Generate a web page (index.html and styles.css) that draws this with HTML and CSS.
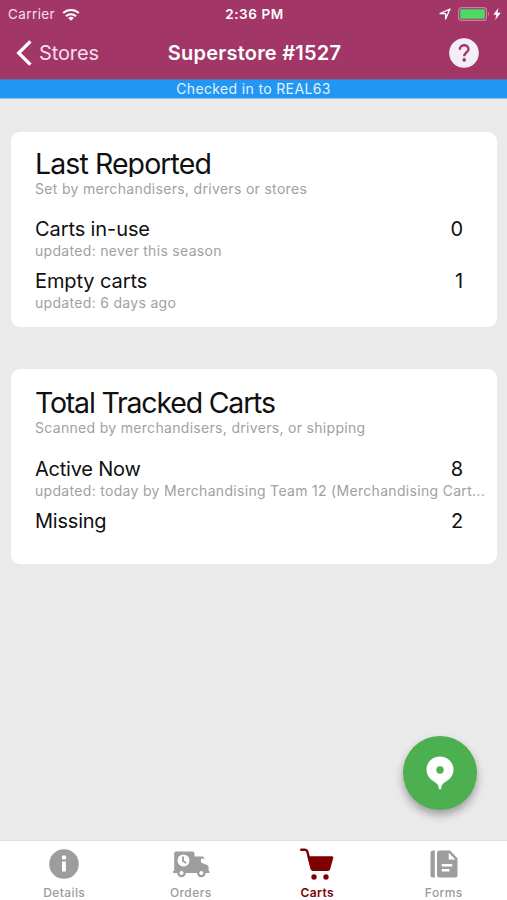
FILE: index.html
```html
<!DOCTYPE html>
<html lang="en">
<head>
<meta charset="utf-8">
<title>Superstore #1527</title>
<link rel="stylesheet" href="styles.css">
</head>
<body>
<div class="app">
  <header class="top">
    <div class="status">
      <div class="status-left">
        <span class="carrier">Carrier</span>
        <svg class="wifi" viewBox="0 0 18 13" width="18" height="13" fill="none" stroke="#fff" stroke-width="2.1"><path d="M1.2 5.1a11.2 11.2 0 0 1 15.6 0M4 8.2a7.2 7.2 0 0 1 10 0"/><path d="M6.2 10a4.2 4.2 0 0 1 5.6 0L9 12.8z" fill="#fff" stroke="none"/></svg>
      </div>
      <span class="time">2:36 PM</span>
      <div class="status-right">
        <svg viewBox="0 0 12 12" width="12" height="12" fill="none" stroke="#fff" stroke-width="1.3" stroke-linejoin="round"><path d="M1 5.6 11 1 6.6 11V5.6z"/></svg>
        <svg class="battery" viewBox="0 0 32 14" width="32" height="14"><rect x=".6" y=".6" width="27.8" height="12.8" rx="3" fill="none" stroke="#c783a6" stroke-width="1.2"/><rect x="2.2" y="2.2" width="24.6" height="9.6" rx="1.4" fill="#4cd964"/><path d="M30 4.8q2 2.2 0 4.4z" fill="#c783a6"/></svg>
        <svg class="bolt" viewBox="0 0 8 12" width="8" height="12" fill="#fff"><path d="M5.4 0 .3 6.8h3L2.3 12l5.4-7.2H4.5z"/></svg>
      </div>
    </div>
    <nav class="nav">
      <a class="back"><svg viewBox="0 0 16 26" width="16" height="26" fill="none" stroke="#fff" stroke-width="3.3"><path d="M14.4 1.3 2.7 13l11.7 11.7"/></svg><span class="back-label">Stores</span></a>
      <h1 class="screen-title">Superstore #1527</h1>
      <svg class="help" viewBox="0 0 30 30" width="30" height="30"><circle cx="15" cy="15" r="14.8" fill="#f3eef5"/><path d="M10.8 11.7c0-5.9 8.7-5.7 8.7-.5 0 3.1-4.3 3.3-4.3 7" fill="none" stroke="#a23767" stroke-width="2.4"/><circle cx="15.2" cy="21.9" r="1.8" fill="#a23767"/></svg>
    </nav>
  </header>
  <div class="banner"><span>Checked in to REAL63</span></div>
  <main class="content">
    <section class="card reported">
      <h2 class="card-title">Last Reported</h2>
      <p class="sub">Set by merchandisers, drivers or stores</p>
      <div class="rows">
        <div class="row"><div class="line"><span>Carts in-use</span><span class="num">0</span></div><p class="upd">updated: never this season</p></div>
        <div class="row"><div class="line"><span>Empty carts</span><span class="num">1</span></div><p class="upd">updated: 6 days ago</p></div>
      </div>
    </section>
    <section class="card tracked">
      <h2 class="card-title">Total Tracked Carts</h2>
      <p class="sub">Scanned by merchandisers, drivers, or shipping</p>
      <div class="rows">
        <div class="row"><div class="line"><span>Active Now</span><span class="num">8</span></div><p class="upd">updated: today by Merchandising Team 12 (Merchandising Cart...</p></div>
        <div class="row"><div class="line"><span>Missing</span><span class="num">2</span></div></div>
      </div>
    </section>
  </main>
  <footer class="tabs">
    <a class="tab"><svg viewBox="0 0 30 30" width="30" height="30"><circle cx="15" cy="15" r="14.8" fill="#9d9d9d"/><path d="M13 12.600h3.900v9.900H13z" fill="#fff"/><circle cx="15" cy="8.500" r="2.200" fill="#fff"/></svg><span>Details</span></a>
    <a class="tab"><svg viewBox="0 0 38 30" width="38" height="30" fill="#9d9d9d"><path d="M4 2.500h16.500a2 2 0 0 1 2 2v3h8.500l1.800 2.300h-3.800v3.800l6.600 2.600q1 .5 1 1.500v4.300h.8v2H1v-2h1.200V4.500a2 2 0 0 1 1.800-2z"/><circle cx="11.500" cy="11.500" r="6" fill="#fff"/><path d="M11 7.400v4.700l3.200 2" fill="none" stroke="#9d9d9d" stroke-width="1.800"/><circle cx="9.500" cy="24" r="4.300"/><circle cx="9.500" cy="24" r="2" fill="#fff"/><circle cx="29.300" cy="24" r="4.300"/><circle cx="29.300" cy="24" r="2" fill="#fff"/></svg><span>Orders</span></a>
    <a class="tab active"><svg viewBox="0 0 34 32" width="34" height="32" fill="#800000"><path d="M1.2 1.700h3.800q1.800 0 2.300 1.800l4.300 16" fill="none" stroke="#800000" stroke-width="2.400" stroke-linecap="round"/><path d="M7.300 8.200h24.500q2 0 1.500 1.900l-3.200 11.200q-.5 1.800-2.300 1.800H12.900q-1.800 0-2.300-1.800z"/><circle cx="14" cy="29" r="2.700"/><circle cx="26" cy="29" r="2.700"/></svg><span>Carts</span></a>
    <a class="tab"><svg viewBox="0 0 28 28" width="28" height="28" fill="#9d9d9d"><path d="M2.800.5H4.800v27H2.800Q.5 27.500.5 25V3Q.5.5 2.800.5zM9.300.5h10.700l7.500 7.700V25q0 2.500-2.500 2.500H9.300q-2.300 0-2.300-2.500V3Q7 .5 9.300.5z"/><path d="M18.700 2.800v6.800h6.700zM11.800 14h10.400v2.400H11.800zM11.800 19h7.600v2.400h-7.600z" fill="#fff"/></svg><span>Forms</span></a>
  </footer>
  <button class="fab" aria-label="Location"><svg viewBox="0 0 28 34" width="28" height="34"><path d="M14 .5C6.500.5.5 6.300.5 13.500c0 5.500 3.200 9.300 7 11.800 3.500 2.300 4.800 3 5.300 7 .2 1.600 2.200 1.600 2.400 0 .5-4 1.800-4.700 5.300-7 3.800-2.500 7-6.300 7-11.800C27.500 6.300 21.500.5 14 .5z" fill="#fff"/><circle cx="14" cy="14" r="3.700" fill="#4caf50"/></svg></button>
</div>
</body>
</html>
```

FILE: styles.css
```css
* { box-sizing: border-box; }
body, h1, h2, p { margin: 0; font-weight: 400; }
body { font-family: Inter, "Liberation Sans", sans-serif; color: #101010; }
svg { display: block; flex: none; }
.app { position: relative; width: 507px; height: 900px; display: flex; flex-direction: column; background: #eaeaea; overflow: hidden; }
.top { height: 79px; flex: none; background: #a23767; color: #fff; }
.status { height: 27px; display: grid; grid-template-columns: 1fr auto 1fr; align-items: center; padding: 0 6px 0 8px; }
.status-left, .status-right { display: flex; align-items: center; }
.status-left { gap: 7px; }
.carrier { font-size: 13.5px; letter-spacing: .4px; color: #f4dfe9; }
.time { font-size: 13.5px; font-weight: 600; letter-spacing: .6px; line-height: 27px; padding-top: 1px; }
.status-right { justify-content: flex-end; }
.battery { margin-left: 7px; }
.bolt { margin-left: 3px; }
.nav { height: 51px; display: grid; grid-template-columns: 1fr auto 1fr; align-items: center; padding: 0 28px; }
.back { display: flex; align-items: center; gap: 7px; margin-left: -12px; }
.back-label { font-size: 20px; letter-spacing: -.1px; color: #f4dfe9; }
.screen-title { font-size: 20px; font-weight: 600; letter-spacing: .22px; position: relative; left: 1px; }
.help { justify-self: end; }
.banner { height: 20px; flex: none; background: #2196f3; border-top: 1px solid #5277b5; border-bottom: 1px solid #8fc5f2; color: #e4f2fd; text-align: center; font-size: 14px; line-height: 18px; letter-spacing: .35px; }
.content { flex: 1; padding: 33px 10px 0 11px; display: flex; flex-direction: column; gap: 42px; }
.card { height: 195px; background: #fff; border-radius: 9px; padding: 18px 12px 0 24px; }
.tracked { padding-top: 20px; }
.card-title { height: 27px; line-height: 27px; font-size: 28.5px; letter-spacing: -1.2px; white-space: nowrap; }
.reported .card-title { overflow: hidden; letter-spacing: -.92px; }
.sub, .upd { color: #a1a1a1; font-size: 14px; letter-spacing: .31px; white-space: nowrap; }
.sub { line-height: 23px; }
.rows { margin-top: 17px; display: flex; flex-direction: column; gap: 8px; }
.tracked .rows { margin-top: 18px; }
.line { display: flex; justify-content: space-between; padding-right: 22px; font-size: 20px; line-height: 24px; letter-spacing: -.1px; }
.tracked .line { letter-spacing: -.22px; }
.upd { line-height: 20px; }
.tabs { height: 60px; flex: none; display: grid; grid-template-columns: repeat(4, 1fr); background: #fff; border-top: 1px solid #dedede; padding-left: 1px; }
.tab { display: grid; grid-template-rows: 46px 12px; justify-items: center; align-items: center; color: #9b9b9b; font-size: 12px; font-weight: 500; line-height: 12px; letter-spacing: .4px; }
.active { color: #800000; font-weight: 600; }
.fab { position: absolute; left: 403px; top: 736px; width: 74px; height: 74px; padding: 0; border: 0; border-radius: 50%; display: flex; align-items: center; justify-content: center; background: #4caf50; box-shadow: 0 5px 9px rgba(0,0,0,.32); }
```
